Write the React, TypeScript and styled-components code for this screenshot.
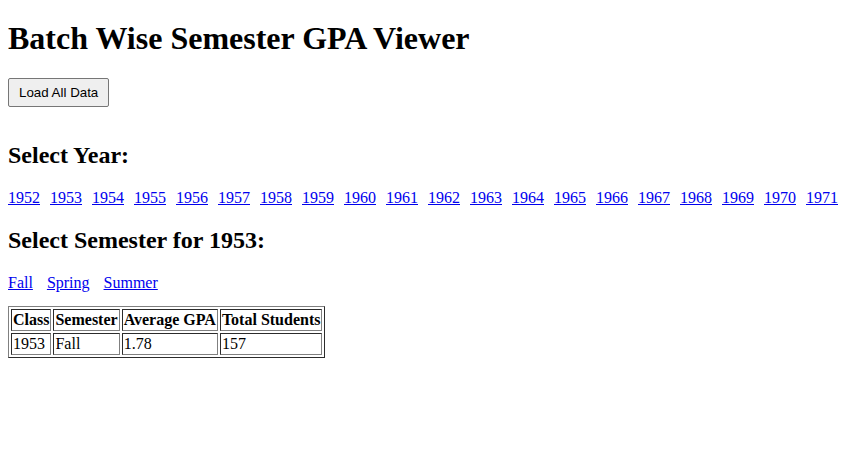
import React from 'react';
import styled, { createGlobalStyle } from 'styled-components';

const GlobalStyle = createGlobalStyle`
  body {
    margin: 8px;
    font-family: "Liberation Serif", "Times New Roman", serif;
    font-size: 16px;
    color: #000;
    background: #fff;
  }
`;

const Title = styled.h1`
  font-size: 32px;
  font-weight: 700;
  margin: 11.5px 0 21.44px;
`;

const LoadButton = styled.button`
  font-family: "Liberation Sans", Arial, sans-serif;
  font-size: 13.33px;
  padding: 6px 10px;
  border: 1px solid #767676;
  border-radius: 2px;
  background: #efefef;
  color: #000;
  margin-bottom: 15px;
  cursor: pointer;
`;

const SectionTitle = styled.h2`
  font-size: 24px;
  font-weight: 700;
  margin: 19.92px 0;
`;

const LinkRow = styled.div<{ $gap: number }>`
  display: flex;
  gap: ${(p) => p.$gap}px;
  margin: 16px 0;
`;

const NavLink = styled.a`
  color: #0000ee;
  text-decoration: underline;
  cursor: pointer;
`;

const Table = styled.table`
  border: 1px outset #808080;
  border-spacing: 2px;
  margin-top: -2px;
`;

const HeadCell = styled.th`
  border: 1px inset #808080;
  padding: 1px;
  text-align: left;
  font-weight: 700;
`;

const Cell = styled.td`
  border: 1px inset #808080;
  padding: 1px;
`;

const years = Array.from({ length: 20 }, (_, i) => 1952 + i);
const semesters = ['Fall', 'Spring', 'Summer'];

const App: React.FC = () => (
  <>
    <GlobalStyle />
    <Title>Batch Wise Semester GPA Viewer</Title>
    <LoadButton>Load All Data</LoadButton>

    <SectionTitle>Select Year:</SectionTitle>
    <LinkRow $gap={10}>
      {years.map((y) => (
        <NavLink key={y}>{y}</NavLink>
      ))}
    </LinkRow>

    <SectionTitle>Select Semester for 1953:</SectionTitle>
    <LinkRow $gap={14}>
      {semesters.map((s) => (
        <NavLink key={s}>{s}</NavLink>
      ))}
    </LinkRow>

    <Table>
      <thead>
        <tr>
          <HeadCell>Class</HeadCell>
          <HeadCell>Semester</HeadCell>
          <HeadCell>Average GPA</HeadCell>
          <HeadCell>Total Students</HeadCell>
        </tr>
      </thead>
      <tbody>
        <tr>
          <Cell>1953</Cell>
          <Cell>Fall</Cell>
          <Cell>1.78</Cell>
          <Cell>157</Cell>
        </tr>
      </tbody>
    </Table>
  </>
);

export default App;
